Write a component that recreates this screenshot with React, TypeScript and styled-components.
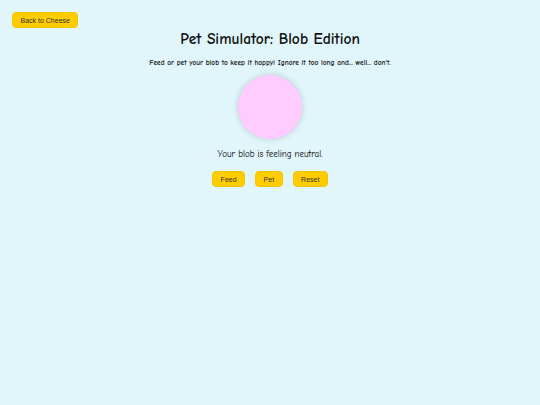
import React, { useState } from "react";
import styled, { createGlobalStyle } from "styled-components";

const GlobalStyle = createGlobalStyle`
  html, body {
    margin: 0;
    padding: 0;
    background: #e0f6fb;
  }
  #root {
    min-height: 100vh;
  }
`;

const moods: Record<string, { text: string; color: string }> = {
  neutral: { text: "Your blob is feeling neutral.", color: "#ffccff" },
  happy: { text: "Your blob is feeling happy!", color: "#ffb3f0" },
  full: { text: "Your blob is full and content.", color: "#ffd6f5" },
};

export default function App() {
  const [mood, setMood] = useState("neutral");
  const current = moods[mood];

  return (
    <Page>
      <GlobalStyle />
      <TopBar>
        <Button>Back to Cheese</Button>
      </TopBar>
      <Main>
        <Title>Pet Simulator: Blob Edition</Title>
        <Intro>Feed or pet your blob to keep it happy! Ignore it too long and... well... don't.</Intro>
        <Blob $color={current.color} />
        <Status>{current.text}</Status>
        <Actions>
          <Button onClick={() => setMood("full")}>Feed</Button>
          <Button onClick={() => setMood("happy")}>Pet</Button>
          <Button onClick={() => setMood("neutral")}>Reset</Button>
        </Actions>
      </Main>
    </Page>
  );
}

const Page = styled.div`
  min-height: 100vh;
  background: #e0f6fb;
  font-family: "Comic Sans MS", "Comic Neue", "DejaVu Sans", sans-serif;
  color: #111;
`;

const TopBar = styled.div`
  display: flex;
  padding: 12px 12px 0;
`;

const Button = styled.button`
  font-family: "Liberation Sans", Arial, sans-serif;
  font-size: 7px;
  color: #333;
  background: #ffcc00;
  border: 1px solid #f5c400;
  border-radius: 4px;
  height: 16px;
  padding: 0 7.5px;
  cursor: pointer;
`;

const Main = styled.div`
  display: flex;
  flex-direction: column;
  align-items: center;
`;

const Title = styled.h1`
  margin: 2px 0 0;
  font-size: 15.5px;
  font-weight: bold;
`;

const Intro = styled.p`
  margin: 10px 0 0;
  font-size: 7.4px;
  font-weight: bold;
  color: #222;
`;

const Blob = styled.div<{ $color: string }>`
  width: 64px;
  height: 64px;
  margin-top: 8px;
  border-radius: 50%;
  background: ${(p) => p.$color};
  box-shadow: 0 0 6px rgba(0, 0, 0, 0.18);
`;

const Status = styled.p`
  margin: 10px 0 0;
  font-size: 9px;
  color: #000;
`;

const Actions = styled.div`
  display: flex;
  gap: 10px;
  margin-top: 12px;
`;
